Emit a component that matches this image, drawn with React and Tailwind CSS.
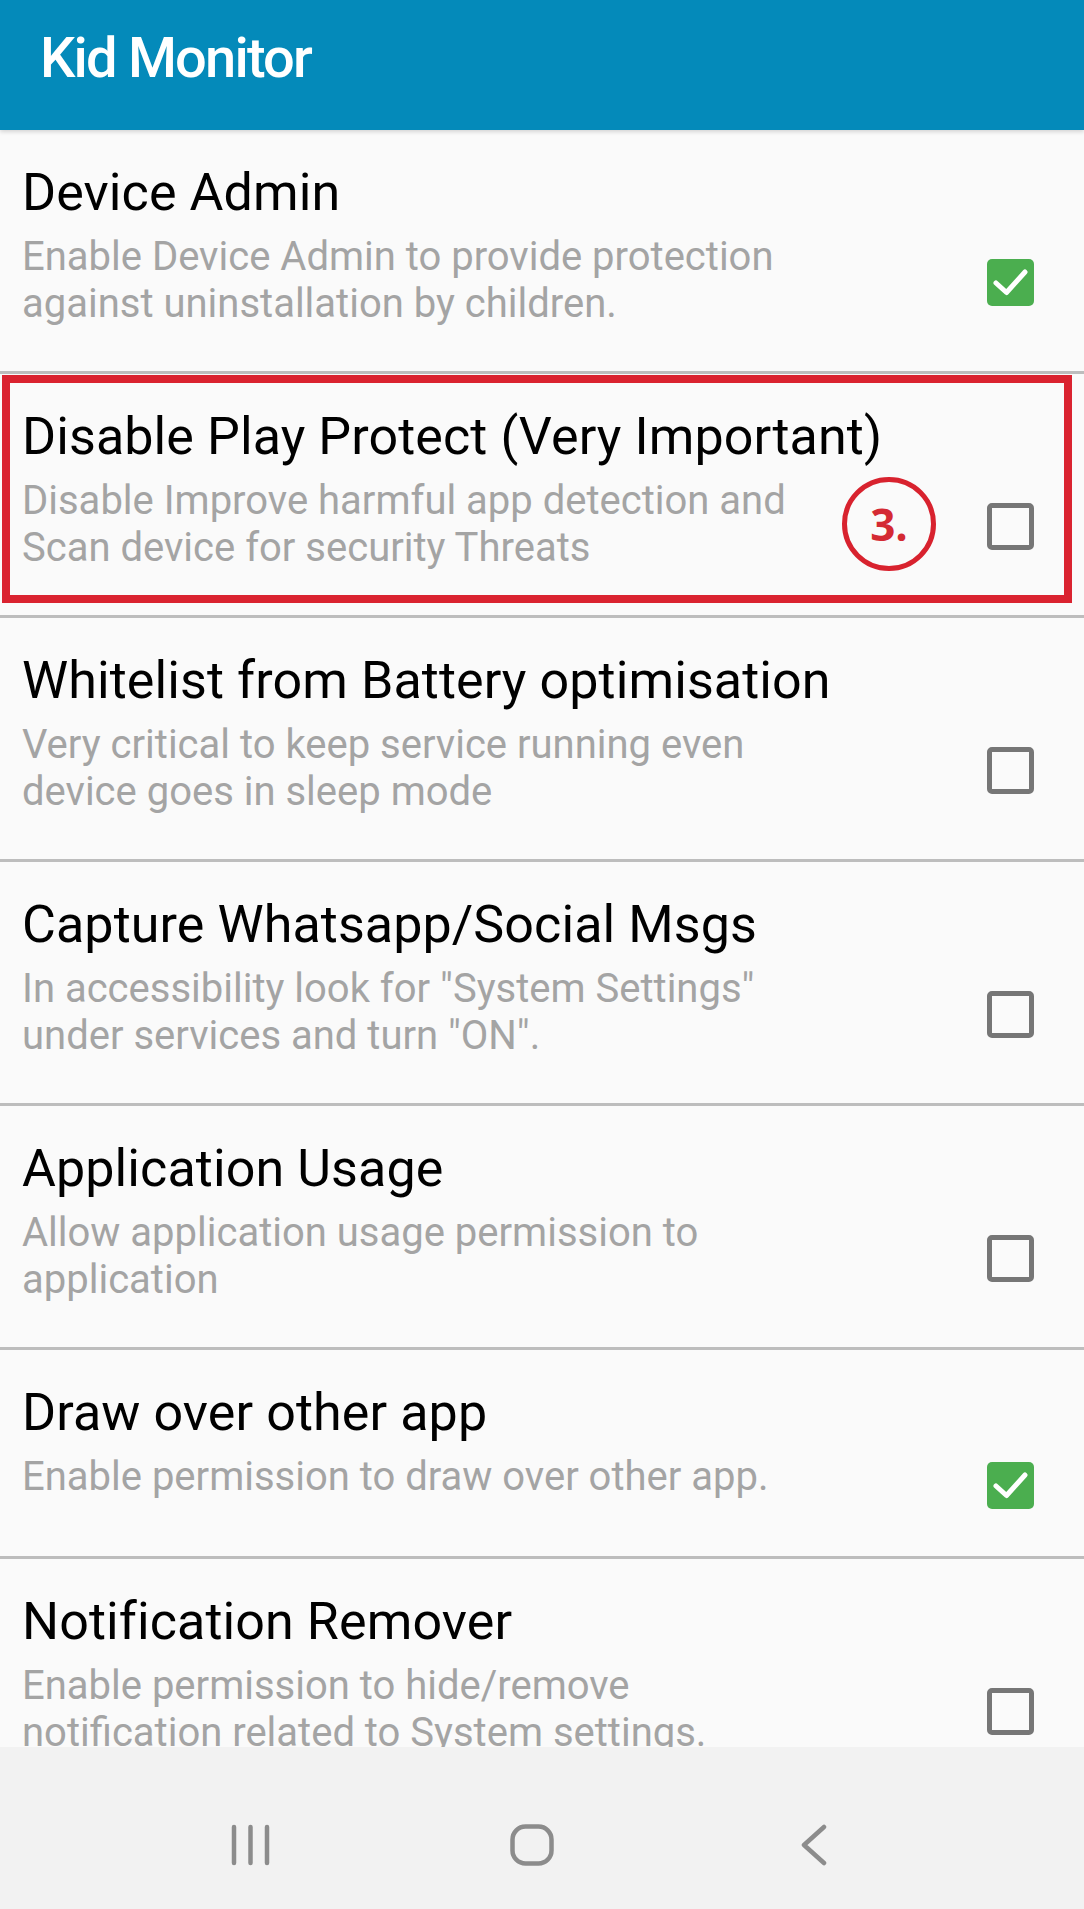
import React from "react";

const rows = [
  { title: "Device Admin", desc: ["Enable Device Admin to provide protection", "against uninstallation by children."], checked: true },
  { title: "Disable Play Protect (Very Important)", desc: ["Disable Improve harmful app detection and", "Scan device for security Threats"], checked: false, highlight: true },
  { title: "Whitelist from Battery optimisation", desc: ["Very critical to keep service running even", "device goes in sleep mode"], checked: false },
  { title: "Capture Whatsapp/Social Msgs", desc: ['In accessibility look for "System Settings"', 'under services and turn "ON".'], checked: false },
  { title: "Application Usage", desc: ["Allow application usage permission to", "application"], checked: false },
  { title: "Draw over other app", desc: ["Enable permission to draw over other app."], checked: true, short: true },
  { title: "Notification Remover", desc: ["Enable permission to hide/remove", "notification related to System settings."], checked: false },
];

function CheckBox({ checked }) {
  if (checked) {
    return (
      <div className="w-[47px] h-[47px] rounded-[5px] bg-[#4bae4f] flex items-center justify-center">
        <svg width="47" height="47" viewBox="0 0 47 47">
          <path d="M9 24 L19.5 33.5 L38 13" fill="none" stroke="#ffffff" strokeWidth="5" strokeLinecap="round" strokeLinejoin="round" />
        </svg>
      </div>
    );
  }
  return <div className="w-[47px] h-[47px] rounded-[5px] border-[5px] border-[#767676]" />;
}

function Row({ row }) {
  return (
    <div className="relative">
      <div className={`flex ${row.short ? "h-[206px]" : "h-[241px]"}`}>
        <div className="flex-1 pl-[22px] pt-[33px]">
          <div className="text-[52px] leading-[60px] text-black whitespace-nowrap tracking-[0.1px]">{row.title}</div>
          <div className="mt-[10px] text-[40px] leading-[47px] text-[#a4a4a4]">
            {row.desc.map((l, i) => (
              <div key={i} className="whitespace-nowrap">{l}</div>
            ))}
          </div>
        </div>
        <div className="pt-[64px] pr-[50px] flex items-center">
          <CheckBox checked={row.checked} />
        </div>
      </div>
      <div className="h-[3px] bg-[#bdbdbd]" />
      {row.highlight && (
        <>
          <div className="absolute left-[2px] right-[12px] top-[1px] bottom-[15px] border-[8px] border-[#da2330]" />
          <div className="absolute left-[842px] top-[103px] w-[94px] h-[94px] rounded-full border-[5px] border-[#d8222e] flex items-center justify-center">
            <span className="text-[44px] font-bold text-[#d42a33] leading-none" style={{ fontFamily: '"Open Sans", sans-serif' }}>3.</span>
          </div>
        </>
      )}
    </div>
  );
}

export default function App() {
  return (
    <div className="w-[1084px] h-[1909px] bg-[#fafafa] flex flex-col overflow-hidden" style={{ fontFamily: 'Roboto, "Noto Sans", sans-serif' }}>
      <div className="h-[130px] bg-[#048aba] pl-[40px] pt-[26px] shadow-[0_2px_4px_rgba(0,0,0,0.15)] relative z-10 shrink-0">
        <div className="text-white text-[56px] leading-[64px] font-medium tracking-[-1.8px]">Kid Monitor</div>
      </div>
      <div className="h-[1617px] overflow-hidden shrink-0">
        {rows.map((r, i) => (
          <Row key={i} row={r} />
        ))}
      </div>
      <div className="flex-1 bg-[#f2f2f2] flex items-start pt-[77px] pl-[231px]">
        <svg width="40" height="42" viewBox="0 0 40 42">
          <g stroke="#8c8c8c" strokeWidth="4.5" strokeLinecap="round">
            <line x1="3" y1="3" x2="3" y2="39" />
            <line x1="19.5" y1="3" x2="19.5" y2="39" />
            <line x1="36" y1="3" x2="36" y2="39" />
          </g>
        </svg>
        <svg width="44" height="42" viewBox="0 0 44 42" className="ml-[239px]">
          <rect x="2.5" y="2.5" width="39" height="37" rx="13" fill="none" stroke="#8c8c8c" strokeWidth="4.5" />
        </svg>
        <svg width="26" height="42" viewBox="0 0 26 42" className="ml-[247px]">
          <polyline points="23,3 3,21 23,39" fill="none" stroke="#8c8c8c" strokeWidth="4.5" strokeLinecap="round" strokeLinejoin="round" />
        </svg>
      </div>
    </div>
  );
}
